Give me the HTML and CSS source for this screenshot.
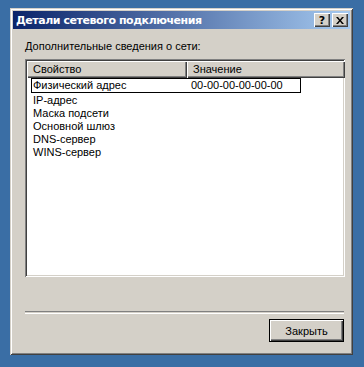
FILE: index.html
```html
<!DOCTYPE html>
<html lang="ru">
<head>
    <meta charset="UTF-8">
    <title>Детали сетевого подключения</title>
    <link rel="stylesheet" href="styles.css">
</head>
<body>
    <div class="dialog">
        <div class="titlebar">
            <span class="title">Детали сетевого подключения</span>
            <div class="title-buttons">
                <button class="tbtn help">?</button>
                <button class="tbtn close">
                    <svg width="8" height="7" viewBox="0 0 8 7"><path d="M0 0h2l2 2.5L6 0h2L5 3.5 8 7H6L4 4.5 2 7H0l3-3.5z" fill="#000"/></svg>
                </button>
            </div>
        </div>
        <div class="body">
            <div class="label">Дополнительные сведения о сети:</div>
            <div class="listview">
                <div class="header">
                    <div class="col col-prop">Свойство</div>
                    <div class="col col-val">Значение</div>
                </div>
                <div class="rows">
                    <div class="row focused">
                        <span class="cell-prop">Физический адрес</span>
                        <span class="cell-val">00-00-00-00-00-00</span>
                    </div>
                    <div class="row"><span class="cell-prop">IP-адрес</span></div>
                    <div class="row"><span class="cell-prop">Маска подсети</span></div>
                    <div class="row"><span class="cell-prop">Основной шлюз</span></div>
                    <div class="row"><span class="cell-prop">DNS-сервер</span></div>
                    <div class="row"><span class="cell-prop">WINS-сервер</span></div>
                </div>
            </div>
            <div class="separator"></div>
            <div class="footer">
                <button class="btn default">Закрыть</button>
            </div>
        </div>
    </div>
</body>
</html>
```

FILE: styles.css
```css
body {
    margin: 0;
    padding: 8px 0 0 10px;
    background: #3a6ea5;
    font-family: "Liberation Sans", Arial, sans-serif;
    font-size: 11px;
    color: #000;
}

.dialog {
    width: 343px;
    height: 347px;
    box-sizing: border-box;
    background: #d4d0c8;
    padding: 3px;
    box-shadow: inset 1px 1px 0 #d4d0c8, inset -1px -1px 0 #404040,
                inset 2px 2px 0 #ffffff, inset -2px -2px 0 #808080;
    display: flex;
    flex-direction: column;
}

.titlebar {
    height: 18px;
    background: linear-gradient(to right, #0a246a, #a6caf0);
    display: flex;
    align-items: center;
    justify-content: space-between;
    padding: 0 2px 0 3px;
}

.title {
    color: #fff;
    font-family: "DejaVu Sans", sans-serif;
    font-weight: bold;
    font-size: 11px;
    letter-spacing: -0.45px;
}

.title-buttons {
    display: flex;
    gap: 2px;
}

.tbtn {
    width: 16px;
    height: 14px;
    padding: 0;
    border: none;
    background: #d4d0c8;
    box-shadow: inset 1px 1px 0 #ffffff, inset -1px -1px 0 #404040,
                inset -2px -2px 0 #808080;
    display: flex;
    align-items: center;
    justify-content: center;
    font-family: "DejaVu Sans", sans-serif;
    font-weight: bold;
    font-size: 11px;
    line-height: 1;
}

.body {
    flex: 1;
    display: flex;
    flex-direction: column;
    padding: 11px 5px 10px 12px;
}

.label {
    height: 19px;
}

.listview {
    height: 218px;
    background: #fff;
    box-shadow: inset 1px 1px 0 #808080, inset -1px -1px 0 #ffffff,
                inset 2px 2px 0 #404040, inset -2px -2px 0 #d4d0c8;
    padding: 2px;
    box-sizing: border-box;
}

.header {
    display: flex;
    height: 17px;
    width: 318px;
}

.col {
    background: #d4d0c8;
    box-shadow: inset 1px 1px 0 #ffffff, inset -1px -1px 0 #404040,
                inset -2px -2px 0 #808080;
    padding: 2px 0 0 6px;
    box-sizing: border-box;
}

.col-prop {
    width: 160px;
}

.col-val {
    flex: 1;
}

.rows {
    padding: 0 0 0 4px;
}

.row {
    height: 14px;
    line-height: 13px;
    display: flex;
    padding-left: 1px;
    border: 1px solid transparent;
    margin-bottom: -1px;
    width: 270px;
    box-sizing: border-box;
}

.row.focused {
    border-color: #000;
    height: 15px;
    margin-bottom: 0;
}

.cell-prop {
    width: 158px;
}

.separator {
    margin-top: 34px;
    height: 1px;
    border-top: 1px solid #808080;
    border-bottom: 1px solid #ffffff;
    width: 319px;
}

.footer {
    display: flex;
    justify-content: flex-end;
    margin-top: 5px;
    padding-right: 1px;
}

.btn {
    width: 75px;
    height: 23px;
    border: none;
    background: #d4d0c8;
    font-family: "Liberation Sans", Arial, sans-serif;
    font-size: 11px;
    padding: 0;
}

.btn.default {
    box-shadow: inset 0 0 0 1px #000, inset 2px 2px 0 #ffffff,
                inset -2px -2px 0 #404040, inset -3px -3px 0 #808080;
}
```
